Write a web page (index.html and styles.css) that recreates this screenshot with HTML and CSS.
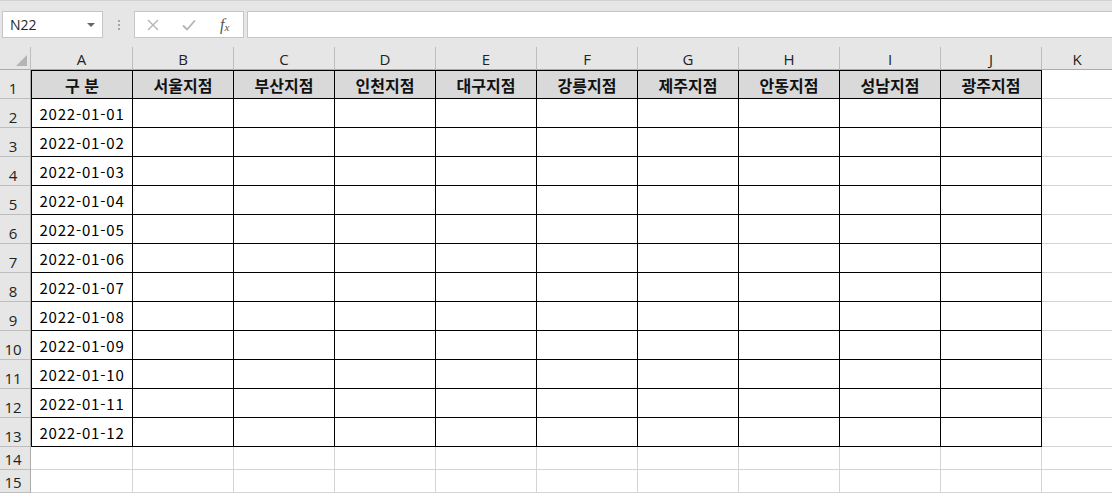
FILE: index.html
```html
<!DOCTYPE html>
<html lang="ko">
<head>
<meta charset="utf-8">
<title>Sheet</title>
<link rel="stylesheet" href="styles.css">
</head>
<body>
<div class="app">
  <div class="toolbar">
    <div class="namebox"><span class="name">N22</span><span class="caret"></span></div>
    <div class="grip"><i></i><i></i><i></i></div>
    <div class="fxbox">
      <svg class="ic" width="14" height="14" viewBox="0 0 14 14"><path d="M2 2L12 12M12 2L2 12" stroke="#b4b4b4" stroke-width="1.4" fill="none"/></svg>
      <svg class="ic" width="16" height="14" viewBox="0 0 16 14"><path d="M2 7.5L6 11.5L14 2.5" stroke="#b4b4b4" stroke-width="1.8" fill="none"/></svg>
      <span class="fx">f<sub>x</sub></span>
    </div>
    <div class="formula"></div>
  </div>

  <div class="sheet">
    <div class="row hdr">
      <div class="corner"><span class="tri"></span></div>
      <div class="ch">A</div><div class="ch">B</div><div class="ch">C</div><div class="ch">D</div><div class="ch">E</div><div class="ch">F</div><div class="ch">G</div><div class="ch">H</div><div class="ch">I</div><div class="ch">J</div><div class="ch">K</div>
    </div>
    <div class="row r29">
      <div class="rh">1</div>
      <div class="c t th first top">구 분</div><div class="c t th top">서울지점</div><div class="c t th top">부산지점</div><div class="c t th top">인천지점</div><div class="c t th top">대구지점</div><div class="c t th top">강릉지점</div><div class="c t th top">제주지점</div><div class="c t th top">안동지점</div><div class="c t th top">성남지점</div><div class="c t th top">광주지점</div><div class="c"></div>
    </div>
    <div class="row r29"><div class="rh">2</div><div class="c t first date">2022-01-01</div><div class="c t"></div><div class="c t"></div><div class="c t"></div><div class="c t"></div><div class="c t"></div><div class="c t"></div><div class="c t"></div><div class="c t"></div><div class="c t"></div><div class="c"></div></div>
    <div class="row r29"><div class="rh">3</div><div class="c t first date">2022-01-02</div><div class="c t"></div><div class="c t"></div><div class="c t"></div><div class="c t"></div><div class="c t"></div><div class="c t"></div><div class="c t"></div><div class="c t"></div><div class="c t"></div><div class="c"></div></div>
    <div class="row r29"><div class="rh">4</div><div class="c t first date">2022-01-03</div><div class="c t"></div><div class="c t"></div><div class="c t"></div><div class="c t"></div><div class="c t"></div><div class="c t"></div><div class="c t"></div><div class="c t"></div><div class="c t"></div><div class="c"></div></div>
    <div class="row r29"><div class="rh">5</div><div class="c t first date">2022-01-04</div><div class="c t"></div><div class="c t"></div><div class="c t"></div><div class="c t"></div><div class="c t"></div><div class="c t"></div><div class="c t"></div><div class="c t"></div><div class="c t"></div><div class="c"></div></div>
    <div class="row r29"><div class="rh">6</div><div class="c t first date">2022-01-05</div><div class="c t"></div><div class="c t"></div><div class="c t"></div><div class="c t"></div><div class="c t"></div><div class="c t"></div><div class="c t"></div><div class="c t"></div><div class="c t"></div><div class="c"></div></div>
    <div class="row r29"><div class="rh">7</div><div class="c t first date">2022-01-06</div><div class="c t"></div><div class="c t"></div><div class="c t"></div><div class="c t"></div><div class="c t"></div><div class="c t"></div><div class="c t"></div><div class="c t"></div><div class="c t"></div><div class="c"></div></div>
    <div class="row r29"><div class="rh">8</div><div class="c t first date">2022-01-07</div><div class="c t"></div><div class="c t"></div><div class="c t"></div><div class="c t"></div><div class="c t"></div><div class="c t"></div><div class="c t"></div><div class="c t"></div><div class="c t"></div><div class="c"></div></div>
    <div class="row r29"><div class="rh">9</div><div class="c t first date">2022-01-08</div><div class="c t"></div><div class="c t"></div><div class="c t"></div><div class="c t"></div><div class="c t"></div><div class="c t"></div><div class="c t"></div><div class="c t"></div><div class="c t"></div><div class="c"></div></div>
    <div class="row r29"><div class="rh">10</div><div class="c t first date">2022-01-09</div><div class="c t"></div><div class="c t"></div><div class="c t"></div><div class="c t"></div><div class="c t"></div><div class="c t"></div><div class="c t"></div><div class="c t"></div><div class="c t"></div><div class="c"></div></div>
    <div class="row r29"><div class="rh">11</div><div class="c t first date">2022-01-10</div><div class="c t"></div><div class="c t"></div><div class="c t"></div><div class="c t"></div><div class="c t"></div><div class="c t"></div><div class="c t"></div><div class="c t"></div><div class="c t"></div><div class="c"></div></div>
    <div class="row r29"><div class="rh">12</div><div class="c t first date">2022-01-11</div><div class="c t"></div><div class="c t"></div><div class="c t"></div><div class="c t"></div><div class="c t"></div><div class="c t"></div><div class="c t"></div><div class="c t"></div><div class="c t"></div><div class="c"></div></div>
    <div class="row r29"><div class="rh">13</div><div class="c t first date">2022-01-12</div><div class="c t"></div><div class="c t"></div><div class="c t"></div><div class="c t"></div><div class="c t"></div><div class="c t"></div><div class="c t"></div><div class="c t"></div><div class="c t"></div><div class="c"></div></div>
    <div class="row r23"><div class="rh">14</div><div class="c"></div><div class="c"></div><div class="c"></div><div class="c"></div><div class="c"></div><div class="c"></div><div class="c"></div><div class="c"></div><div class="c"></div><div class="c"></div><div class="c"></div></div>
    <div class="row r23"><div class="rh">15</div><div class="c"></div><div class="c"></div><div class="c"></div><div class="c"></div><div class="c"></div><div class="c"></div><div class="c"></div><div class="c"></div><div class="c"></div><div class="c"></div><div class="c"></div></div>
  </div>
</div>
</body>
</html>
```

FILE: styles.css
```css
* { box-sizing: border-box; }
html, body { margin: 0; padding: 0; }
body {
  width: 1112px;
  height: 494px;
  overflow: hidden;
  background: #ffffff;
  font-family: "Noto Sans CJK KR", "Noto Sans", sans-serif;
  color: #000;
}
.app { width: 1112px; }

.toolbar {
  height: 47px;
  background: #e6e6e6;
  border-top: 1px solid #d2d2d2;
  display: flex;
  align-items: flex-start;
  padding: 10px 0 0 2px;
}
.namebox {
  width: 101px;
  height: 27px;
  background: #fff;
  border: 1px solid #c6c6c6;
  display: flex;
  align-items: center;
  justify-content: space-between;
  padding: 0 7px 0 7px;
}
.name {
  font-family: "Open Sans", "Noto Sans", sans-serif;
  font-size: 14px;
  color: #262626;
}
.caret {
  width: 0; height: 0;
  border-left: 4px solid transparent;
  border-right: 4px solid transparent;
  border-top: 4px solid #666;
  margin-top: 1px;
}
.grip {
  width: 31px;
  height: 27px;
  display: flex;
  flex-direction: column;
  align-items: center;
  justify-content: center;
  gap: 2px;
}
.grip i {
  display: block;
  width: 2px; height: 2px;
  background: #a6a6a6;
}
.fxbox {
  width: 110px;
  height: 27px;
  background: #fff;
  border: 1px solid #c6c6c6;
  display: flex;
  align-items: center;
  padding: 0 0 0 11px;
  gap: 21px;
}
.fx {
  font-family: "Liberation Serif", serif;
  font-style: italic;
  font-size: 16px;
  color: #555;
  margin-left: 2px;
}
.fx sub { font-size: 11px; vertical-align: -1px; }
.formula {
  flex: 1;
  height: 27px;
  margin-left: 3px;
  background: #fff;
  border: 1px solid #c6c6c6;
  border-right: none;
}

.sheet { width: 1112px; overflow: hidden; }
.row {
  display: grid;
  grid-template-columns: 31px 102px repeat(9, 101px) 71px;
  width: 1112px;
}
.hdr { height: 23px; background: #e6e6e6; }
.r29 { height: 29px; }
.r23 { height: 23px; }

.corner {
  border-right: 1px solid #bdbdbd;
  border-bottom: 1px solid #ababab;
  position: relative;
}
.tri {
  position: absolute;
  right: 3px;
  bottom: 3px;
  width: 0; height: 0;
  border-left: 11px solid transparent;
  border-bottom: 11px solid #b4b4b4;
}
.ch {
  border-right: 1px solid #bdbdbd;
  border-bottom: 1px solid #ababab;
  font-family: "Open Sans", "Noto Sans", sans-serif;
  font-size: 15px;
  color: #222;
  display: flex;
  align-items: center;
  justify-content: center;
  padding-top: 2px;
}
.rh {
  background: #e6e6e6;
  border-right: 1px solid #ababab;
  border-bottom: 1px solid #bdbdbd;
  font-family: "Open Sans", "Noto Sans", sans-serif;
  font-size: 15px;
  color: #222;
  display: flex;
  align-items: flex-end;
  justify-content: center;
  padding: 0 4px 0 0;
}
.r23 .rh { align-items: center; padding-top: 1px; }

.c {
  border-right: 1px solid #d4d4d4;
  border-bottom: 1px solid #d4d4d4;
  display: flex;
  align-items: center;
  justify-content: center;
}
.c.t {
  border-right: 1px solid #000;
  border-bottom: 1px solid #000;
}
.c.first { border-left: 1px solid #000; }
.c.top { border-top: 1px solid #000; }
.th {
  background: #d9d9d9;
  font-weight: 700;
  font-size: 16px;
  color: #111;
}
.date {
  font-size: 15px;
  color: #000;
  letter-spacing: 0.8px;
}
```
